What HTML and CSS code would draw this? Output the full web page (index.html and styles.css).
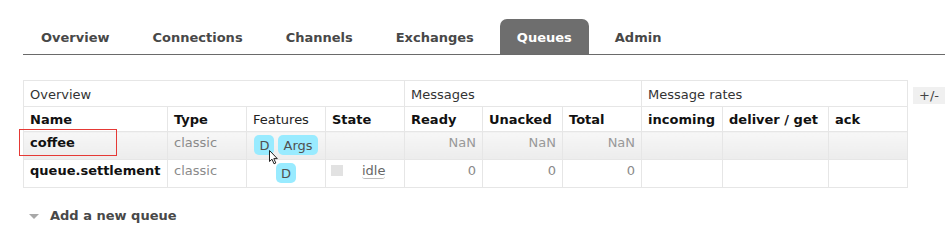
FILE: index.html
```html
<!DOCTYPE html>
<html>
<head>
<meta charset="utf-8">
<link rel="stylesheet" href="styles.css">
</head>
<body>
<div class="page">
  <ul class="tabs">
    <li class="tab">Overview</li>
    <li class="tab">Connections</li>
    <li class="tab">Channels</li>
    <li class="tab">Exchanges</li>
    <li class="tab active">Queues</li>
    <li class="tab">Admin</li>
  </ul>

  <div class="list-wrap">
    <table class="list">
      <colgroup>
        <col class="c-name"><col class="c-type"><col class="c-feat"><col class="c-state">
        <col class="c-ready"><col class="c-unacked"><col class="c-total">
        <col class="c-in"><col class="c-deliver"><col class="c-ack">
      </colgroup>
      <thead>
        <tr class="group">
          <th colspan="4">Overview</th>
          <th colspan="3">Messages</th>
          <th colspan="3">Message rates</th>
        </tr>
        <tr class="heads">
          <th>Name</th>
          <th>Type</th>
          <th class="plain">Features</th>
          <th>State</th>
          <th>Ready</th>
          <th>Unacked</th>
          <th>Total</th>
          <th>incoming</th>
          <th>deliver / get</th>
          <th>ack</th>
        </tr>
      </thead>
      <tbody>
        <tr class="alt">
          <td class="name">coffee</td>
          <td class="muted">classic</td>
          <td class="feat"><span class="badge">D</span><span class="badge">Args</span></td>
          <td></td>
          <td class="num nan">NaN</td>
          <td class="num nan">NaN</td>
          <td class="num nan">NaN</td>
          <td></td>
          <td></td>
          <td></td>
        </tr>
        <tr>
          <td class="name">queue.settlement</td>
          <td class="muted">classic</td>
          <td class="feat"><span class="badge">D</span></td>
          <td class="state"><span class="state-box"></span><span class="idle">idle</span></td>
          <td class="num">0</td>
          <td class="num">0</td>
          <td class="num">0</td>
          <td></td>
          <td></td>
          <td></td>
        </tr>
      </tbody>
    </table>
    <div class="toggle">+/-</div>
  </div>

  <div class="section-head">
    <span class="tri"></span>
    <span>Add a new queue</span>
  </div>
</div>

<div class="highlight"></div>
<svg class="cursor" width="10" height="15" viewBox="0 0 10 15">
  <path d="M0.5 0.5 L0.5 11.5 L3 9.2 L5 13.8 L6.8 13 L4.8 8.6 L8.3 8.6 Z" fill="#fff" stroke="#222" stroke-width="1" stroke-linejoin="round"/>
</svg>
</body>
</html>
```

FILE: styles.css
```css
html, body {
  margin: 0;
  padding: 0;
  background: #fff;
  overflow: hidden;
}

body {
  font-family: "DejaVu Sans", Verdana, sans-serif;
  font-size: 13px;
  line-height: 15px;
  color: #333;
  width: 945px;
  height: 241px;
  position: relative;
}

.page {
  padding: 19px 0 0 23px;
  overflow: hidden;
}

/* ---------- tabs ---------- */
.tabs {
  list-style: none;
  margin: 0;
  padding: 0 0 0 1px;
  display: flex;
  gap: 9px;
  border-bottom: 1px solid #6a6a6a;
}

.tab {
  padding: 11px 17px 9px;
  font-weight: bold;
  color: #484848;
  border-radius: 7px 7px 0 0;
}

.tab.active {
  background: #6e6e6e;
  color: #fff;
}

/* ---------- table ---------- */
.list-wrap {
  display: flex;
  align-items: flex-start;
  margin-top: 25px;
  overflow: hidden;
}

.list {
  border-collapse: collapse;
  table-layout: fixed;
  width: 884px;
  flex: none;
}

.c-name { width: 144px; }
.c-type { width: 79px; }
.c-feat { width: 79px; }
.c-state { width: 79px; }
.c-ready { width: 78px; }
.c-unacked { width: 80px; }
.c-total { width: 79px; }
.c-in { width: 81px; }
.c-deliver { width: 106px; }
.c-ack { width: 79px; }

.list th,
.list td {
  border: 1px solid #e6e6e6;
  text-align: left;
  vertical-align: top;
  white-space: nowrap;
  overflow: hidden;
}

.group th {
  font-weight: normal;
  color: #333;
  padding: 6px 6px 4px;
}

.heads th {
  font-weight: bold;
  color: #111;
  padding: 5px 6px 4px;
}

.heads th.plain {
  font-weight: normal;
  color: #222;
}

.list td {
  padding: 3px 6px 9px;
  color: #333;
}

.list tr.alt td {
  background: linear-gradient(#f7f7f7, #ececec);
}

.list td.name {
  font-weight: bold;
  color: #111;
}

.list td.muted {
  color: #8a8a8a;
}

.list td.num {
  text-align: right;
  color: #8a8a8a;
}

.list td.nan {
  color: #999;
}

.list td.feat {
  text-align: center;
  padding: 3px 0 4px;
}

.badge {
  display: inline-block;
  background: #99ebff;
  color: #505050;
  border-radius: 5px;
  padding: 3px 5px 2px;
  margin: 0 2px;
}

.list td.state {
  padding-left: 5px;
}

.state-box {
  display: inline-block;
  width: 12px;
  height: 11px;
  background: #e2e2e2;
  vertical-align: -1px;
  margin-right: 19px;
}

.idle {
  color: #666;
  border-bottom: 1px solid #bbb;
  border-radius: 0 0 3px 3px;
}

.toggle {
  flex: none;
  margin: 7px 0 0 5px;
  background: #f0f0f0;
  color: #444;
  padding: 1px 6px 1px;
  white-space: nowrap;
}

/* ---------- section header ---------- */
.section-head {
  display: flex;
  align-items: center;
  gap: 11px;
  margin-top: 20px;
  padding-left: 6px;
  font-weight: bold;
  color: #484848;
}

.tri {
  width: 0;
  height: 0;
  border-left: 5.5px solid transparent;
  border-right: 5.5px solid transparent;
  border-top: 5px solid #a8a8a8;
  margin-top: 1px;
}

/* ---------- overlays ---------- */
.highlight {
  position: absolute;
  left: 19px;
  top: 129px;
  width: 96px;
  height: 25px;
  border: 1px solid #e53935;
}

.cursor {
  position: absolute;
  left: 269px;
  top: 150px;
}
```
